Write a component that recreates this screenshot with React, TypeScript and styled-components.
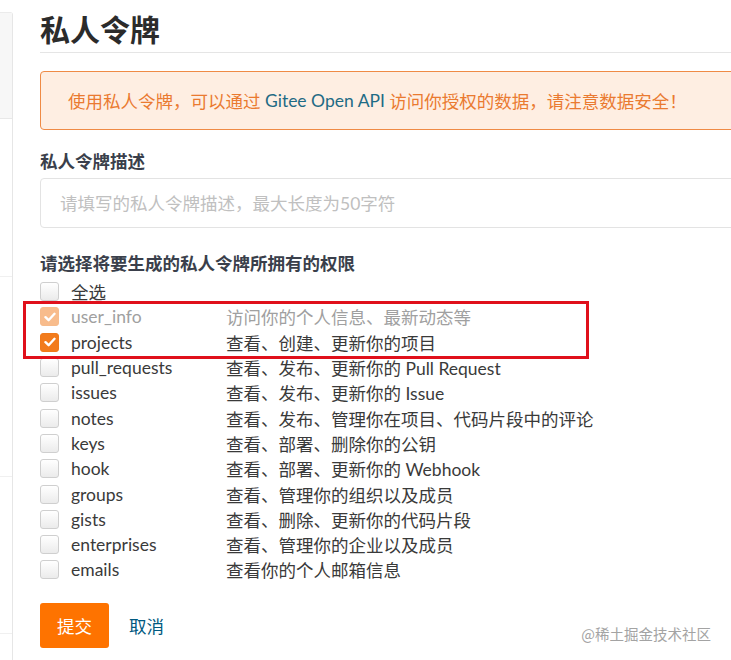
import React from 'react';
import styled, { createGlobalStyle } from 'styled-components';

const GlobalStyle = createGlobalStyle`
  html, body {
    margin: 0;
    padding: 0;
    background: #ffffff;
    overflow: hidden;
  }
  body {
    font-family: "Lato", "Noto Sans CJK SC", sans-serif;
    color: #333333;
  }
`;

interface Scope {
  name: string;
  desc: string;
  checked?: boolean;
  disabled?: boolean;
}

const scopes: Scope[] = [
  { name: 'user_info', desc: '访问你的个人信息、最新动态等', checked: true, disabled: true },
  { name: 'projects', desc: '查看、创建、更新你的项目', checked: true },
  { name: 'pull_requests', desc: '查看、发布、更新你的 Pull Request' },
  { name: 'issues', desc: '查看、发布、更新你的 Issue' },
  { name: 'notes', desc: '查看、发布、管理你在项目、代码片段中的评论' },
  { name: 'keys', desc: '查看、部署、删除你的公钥' },
  { name: 'hook', desc: '查看、部署、更新你的 Webhook' },
  { name: 'groups', desc: '查看、管理你的组织以及成员' },
  { name: 'gists', desc: '查看、删除、更新你的代码片段' },
  { name: 'enterprises', desc: '查看、管理你的企业以及成员' },
  { name: 'emails', desc: '查看你的个人邮箱信息' },
];

const CheckMark = () => (
  <svg width="12" height="10" viewBox="0 0 12 10">
    <path d="M1.5 5.2 L4.6 8.2 L10.5 1.8" fill="none" stroke="#ffffff" strokeWidth="2.4" strokeLinecap="round" strokeLinejoin="round" />
  </svg>
);

const App: React.FC = () => {
  return (
    <>
      <GlobalStyle />
      <Page>
        <Sidebar>
          <SideHeader />
          <SideSection $h={158} />
          <SideSection $h={200} />
          <SideSection $h={157} />
        </Sidebar>

        <Main>
          <Title>私人令牌</Title>

          <Alert>
            使用私人令牌，可以通过&nbsp;<AlertLink>Gitee Open API</AlertLink>&nbsp;访问你授权的数据，请注意数据安全！
          </Alert>

          <FieldLabel $top={20}>私人令牌描述</FieldLabel>
          <Input placeholder="请填写的私人令牌描述，最大长度为50字符" />

          <FieldLabel $top={24}>请选择将要生成的私人令牌所拥有的权限</FieldLabel>
          <ScopeList>
            <ScopeRow>
              <Box />
              <ScopeName>全选</ScopeName>
            </ScopeRow>
            {scopes.map((s) => (
              <ScopeRow key={s.name}>
                <Box $checked={s.checked} $disabled={s.disabled}>
                  {s.checked && <CheckMark />}
                </Box>
                <ScopeName $disabled={s.disabled}>{s.name}</ScopeName>
                <ScopeDesc $disabled={s.disabled}>{s.desc}</ScopeDesc>
              </ScopeRow>
            ))}
            <Highlight />
          </ScopeList>

          <Actions>
            <SubmitButton>提交</SubmitButton>
            <CancelLink>取消</CancelLink>
          </Actions>
        </Main>

        <Watermark>@稀土掘金技术社区</Watermark>
      </Page>
    </>
  );
};

const Page = styled.div`
  position: relative;
  display: flex;
  width: 731px;
  height: 660px;
  overflow: hidden;
`;

const Sidebar = styled.div`
  flex: 0 0 12px;
  margin-top: 12px;
  display: flex;
  flex-direction: column;
  border-top: 1px solid #ebebeb;
  border-right: 1px solid #e6e6e6;
  border-radius: 0 3px 0 0;
`;

const SideHeader = styled.div`
  height: 105px;
  background: #f7f7f7;
  border-bottom: 1px solid #e8e8e8;
`;

const SideSection = styled.div<{ $h: number }>`
  height: ${(p) => p.$h - 1}px;
  border-bottom: 1px solid #f0f0f0;
`;

const Main = styled.div`
  flex: 0 0 760px;
  margin-left: 27px;
  display: flex;
  flex-direction: column;
  align-items: flex-start;
`;

const Title = styled.h1`
  align-self: stretch;
  margin: 8px 0 0;
  padding-bottom: 2px;
  font-size: 30px;
  line-height: 42px;
  font-weight: 700;
  color: #2b2b2b;
  border-bottom: 1px solid #e5e5e5;
`;

const Alert = styled.div`
  align-self: stretch;
  box-sizing: border-box;
  margin-top: 18px;
  height: 59px;
  padding: 0 27px;
  display: flex;
  align-items: center;
  background: #feeee2;
  border: 1px solid #ef8a45;
  border-radius: 4px;
  color: #ea7a30;
  font-size: 17.5px;
  white-space: nowrap;
`;

const AlertLink = styled.span`
  color: #1f6b85;
`;

const FieldLabel = styled.div<{ $top: number }>`
  margin-top: ${(p) => p.$top}px;
  font-size: 17.5px;
  line-height: 24px;
  font-weight: 700;
  color: #3a3f4b;
`;

const Input = styled.input`
  align-self: stretch;
  box-sizing: border-box;
  margin-top: 4px;
  height: 50px;
  padding: 0 19px;
  border: 1px solid #e3e3e3;
  border-radius: 4px;
  font-family: "Lato", "Noto Sans CJK SC", sans-serif;
  font-size: 17.5px;
  outline: none;
  &::placeholder {
    color: #c0c0c0;
  }
`;

const ScopeList = styled.div`
  position: relative;
  margin-top: 3px;
  display: flex;
  flex-direction: column;
`;

const ScopeRow = styled.div`
  display: flex;
  align-items: center;
  height: 25.3px;
  font-size: 17.5px;
  white-space: nowrap;
`;

const Box = styled.span<{ $checked?: boolean; $disabled?: boolean }>`
  box-sizing: border-box;
  width: 19px;
  height: 19px;
  margin-right: 12px;
  border-radius: 3px;
  display: flex;
  align-items: center;
  justify-content: center;
  border: 1px solid ${(p) => (p.$checked ? '#f07a1a' : '#cfcfcf')};
  background: ${(p) => (p.$checked ? '#f27b1c' : 'linear-gradient(#ffffff, #ebebeb)')};
  opacity: ${(p) => (p.$disabled ? 0.5 : 1)};
`;

const ScopeName = styled.span<{ $disabled?: boolean }>`
  width: 155px;
  color: ${(p) => (p.$disabled ? '#a0a0a0' : '#3a3a3a')};
`;

const ScopeDesc = styled.span<{ $disabled?: boolean }>`
  color: ${(p) => (p.$disabled ? '#a0a0a0' : '#3a3a3a')};
`;

const Highlight = styled.div`
  position: absolute;
  left: -17px;
  top: 21.6px;
  width: 566px;
  height: 58px;
  box-sizing: border-box;
  border: 3px solid #e0101b;
  pointer-events: none;
`;

const Actions = styled.div`
  margin-top: 20px;
  display: flex;
  align-items: center;
`;

const SubmitButton = styled.button`
  width: 69px;
  height: 45px;
  border: none;
  border-radius: 3px;
  background: #fe7300;
  color: #ffffff;
  font-family: "Lato", "Noto Sans CJK SC", sans-serif;
  font-size: 17.5px;
  padding: 0;
`;

const CancelLink = styled.span`
  margin-left: 20px;
  font-size: 17.5px;
  color: #005980;
`;

const Watermark = styled.div`
  position: absolute;
  right: 20px;
  bottom: 16px;
  font-family: "Noto Sans CJK SC", sans-serif;
  font-size: 14.5px;
  color: #a3a3a3;
`;

export default App;
